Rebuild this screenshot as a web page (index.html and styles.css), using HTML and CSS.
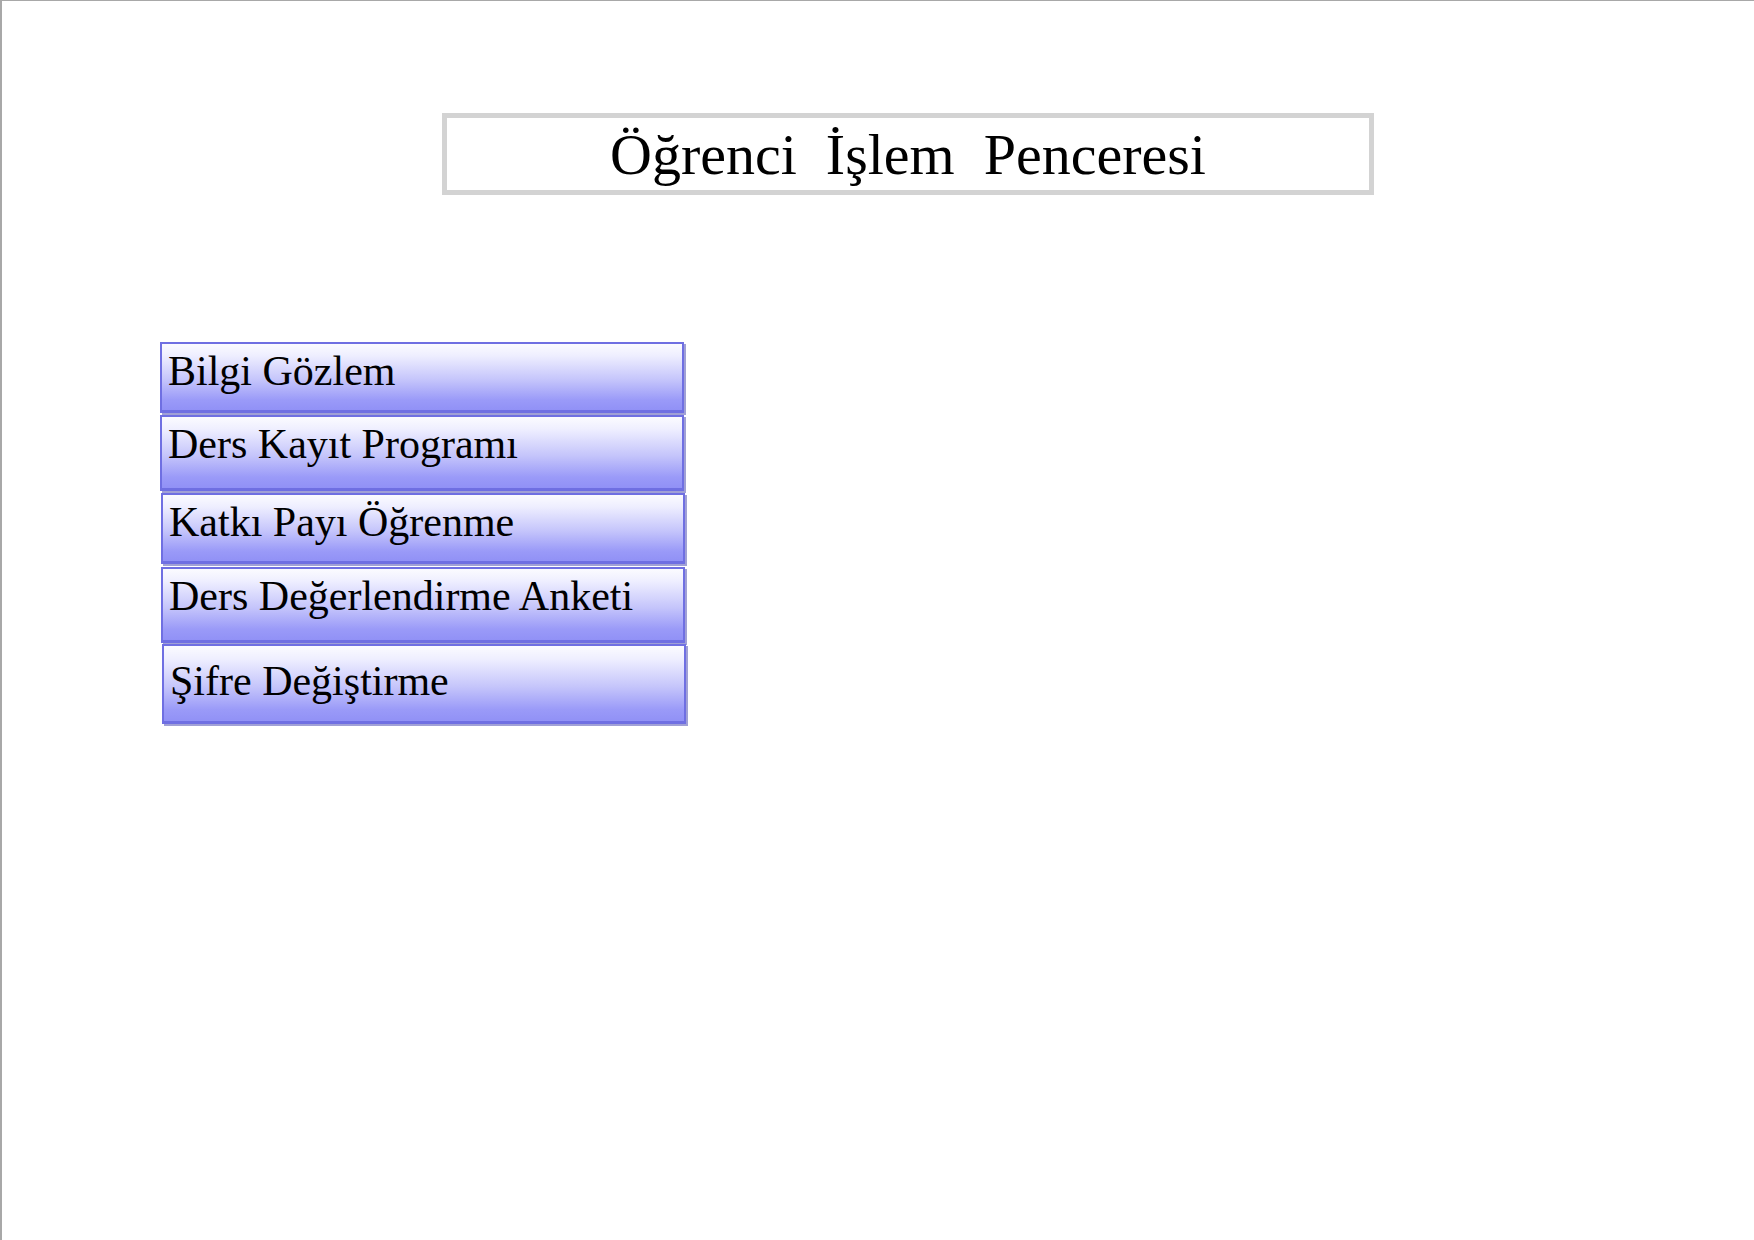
FILE: index.html
```html
<!DOCTYPE html>
<html lang="tr">
<head>
<meta charset="utf-8">
<title>Öğrenci İşlem Penceresi</title>
<link rel="stylesheet" href="styles.css">
</head>
<body>
<div class="page">
  <div class="title-box"><span class="title">Öğrenci  İşlem  Penceresi</span></div>
  <div class="menu">
    <div class="btn btn-1">Bilgi Gözlem</div>
    <div class="btn btn-2">Ders Kayıt Programı</div>
    <div class="btn btn-3">Katkı Payı Öğrenme</div>
    <div class="btn btn-4">Ders Değerlendirme Anketi</div>
    <div class="btn btn-5">Şifre Değiştirme</div>
  </div>
</div>
</body>
</html>
```

FILE: styles.css
```css
html, body {
  margin: 0;
  padding: 0;
  background: #ffffff;
}
.page {
  box-sizing: border-box;
  width: 1754px;
  height: 1240px;
  border-top: 1px solid #a8a8a8;
  border-left: 2px solid #a8a8a8;
  padding-top: 112px;
  padding-left: 440px;
  font-family: "Liberation Serif", "Times New Roman", serif;
  color: #000;
}
.title-box {
  box-sizing: border-box;
  width: 932px;
  height: 82px;
  border: 5px solid #d3d3d3;
  text-align: center;
  padding-top: 1px;
}
.title {
  font-size: 58px;
  line-height: 71px;
  white-space: pre;
}
.menu {
  margin-top: 147px;
  margin-left: -282px;
  display: flex;
  flex-direction: column;
  gap: 2px;
  width: 528px;
}
.btn {
  box-sizing: border-box;
  width: 524px;
  border: 2px solid #6f6fe2;
  border-bottom-width: 3px;
  background: linear-gradient(to bottom, #fbfbff 0%, #eeeeff 18%, #c4c4fb 55%, #9a9af8 85%, #9191f6 100%);
  box-shadow: 2px 2px 0 #a0a0d6;
  font-size: 42px;
  line-height: 46px;
  padding: 4px 0 0 6px;
  white-space: nowrap;
}
.btn-1 { height: 71px; }
.btn-2 { height: 76px; }
.btn-3 { height: 71px; margin-left: 1px; }
.btn-4 { height: 76px; margin-left: 1px; margin-top: 1px; }
.btn-5 { height: 80px; margin-left: 2px; margin-top: -1px; padding-top: 12px; }
```
